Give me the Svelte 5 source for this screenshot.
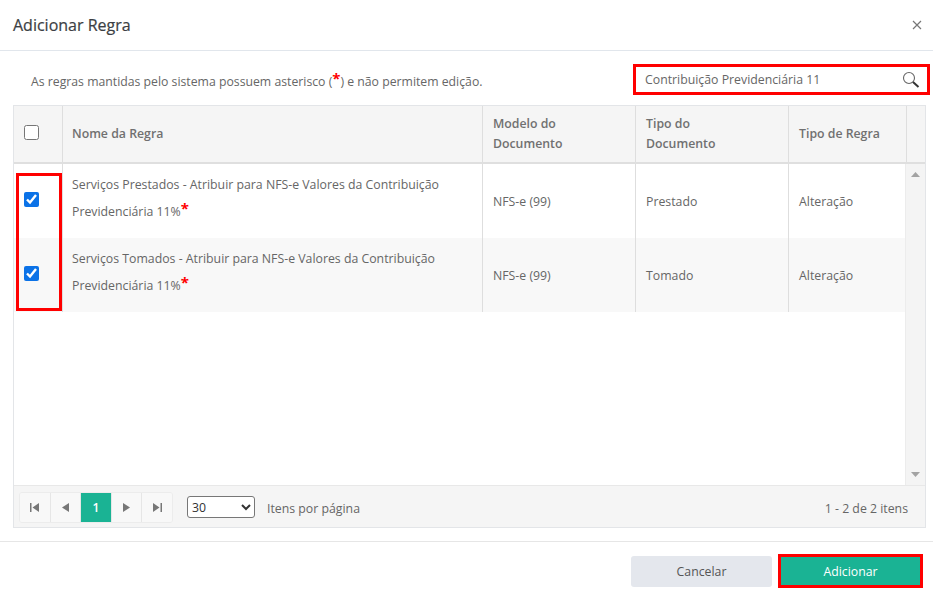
<script>
    const rows = [
        { name: "Serviços Prestados - Atribuir para NFS-e Valores da Contribuição Previdenciária 11%", model: "NFS-e (99)", doc: "Prestado", type: "Alteração" },
        { name: "Serviços Tomados - Atribuir para NFS-e Valores da Contribuição Previdenciária 11%", model: "NFS-e (99)", doc: "Tomado", type: "Alteração" }
    ];
</script>

<div class="modal">
    <header class="head">
        <h2>Adicionar Regra</h2>
        <svg class="close" width="10" height="10" viewBox="0 0 10 10"><path d="M1 1l8 8M9 1l-8 8" stroke="#777" stroke-width="1.2" fill="none" /></svg>
    </header>

    <div class="tools">
        <p>As regras mantidas pelo sistema possuem asterisco (<span class="star">*</span>) e não permitem edição.</p>
        <div class="search">
            <span>Contribuição Previdenciária 11</span>
            <svg width="18" height="18" viewBox="0 0 18 18"><circle cx="7" cy="7" r="5.500" stroke="#666" stroke-width="1.1" fill="none" /><path d="M11 11l5.500 5" stroke="#333" stroke-width="2" fill="none" /></svg>
        </div>
    </div>

    <div class="grid">
        <div class="row headrow">
            <div class="cell check"><input type="checkbox" /></div>
            <div class="cell first">Nome da Regra</div>
            <div class="cell two">Modelo do<br />Documento</div>
            <div class="cell two">Tipo do<br />Documento</div>
            <div class="cell">Tipo de Regra</div>
            <div class="cell"></div>
        </div>

        <div class="body">
            <div class="rows">
                {#each rows as r, i}
                    <div class="row item" class:alt={i % 2 === 1}>
                        <div class="cell check"><input type="checkbox" checked /></div>
                        <div class="cell first name">{r.name}<span class="star">*</span></div>
                        <div class="cell">{r.model}</div>
                        <div class="cell">{r.doc}</div>
                        <div class="cell">{r.type}</div>
                    </div>
                {/each}
            </div>
            <div class="scroll">
                <svg width="9" height="5" viewBox="0 0 9 5"><path d="M4.500 0L9 5H0z" fill="#a3a3a3" /></svg>
                <svg width="9" height="5" viewBox="0 0 9 5"><path d="M0 0h9L4.500 5z" fill="#a3a3a3" /></svg>
            </div>
            <div class="mark"></div>
        </div>

        <div class="pager">
            <div class="pages">
                <button aria-label="Primeira"><svg width="9" height="9" viewBox="0 0 9 9"><path d="M0 0h1.500v9H0zM9 0v9L2.500 4.500z" fill="#777" /></svg></button>
                <button aria-label="Anterior"><svg width="7" height="9" viewBox="0 0 7 9"><path d="M7 0v9L0 4.500z" fill="#777" /></svg></button>
                <button class="on">1</button>
                <button aria-label="Próxima"><svg width="7" height="9" viewBox="0 0 7 9"><path d="M0 0v9l7-4.500z" fill="#777" /></svg></button>
                <button aria-label="Última"><svg width="9" height="9" viewBox="0 0 9 9"><path d="M9 0H7.500v9H9zM0 0v9l6.500-4.500z" fill="#777" /></svg></button>
            </div>
            <select>
                <option>30</option>
            </select>
            <span class="per">Itens por página</span>
            <span class="info">1 - 2 de 2 itens</span>
        </div>
    </div>

    <footer>
        <button class="cancel">Cancelar</button>
        <button class="add">Adicionar</button>
    </footer>
</div>

<style>
    :global(body) {
        background: #fff;
    }

    .modal {
        width: 933px;
        height: 589px;
        overflow: hidden;
        font-family: "Open Sans", sans-serif;
        font-size: 12.3px;
        color: #666;
    }

    .head {
        height: 51px;
        box-sizing: border-box;
        padding: 0 11px 0 13px;
        border-bottom: 1px solid #e1e6ec;
        display: flex;
        justify-content: space-between;
        align-items: center;
    }

    .head h2 {
        margin: 0;
        font-size: 16px;
        font-weight: 400;
        color: #3c3f44;
        -webkit-text-stroke: 0.2px #3c3f44;
    }

    .tools {
        height: 54px;
        box-sizing: border-box;
        padding: 13px 3px 0 31px;
        display: flex;
        justify-content: space-between;
        align-items: flex-start;
    }

    .tools p {
        margin: 10px 0 0;
        line-height: 16px;
        font-size: 12.250px;
    }

    .star {
        color: #f00;
        font-size: 15px;
        font-weight: 700;
        line-height: 0;
        vertical-align: 2px;
    }

    .search {
        width: 297px;
        height: 31px;
        box-sizing: border-box;
        border: 3px solid #f00;
        padding: 0 7px 0 9px;
        display: flex;
        justify-content: space-between;
        align-items: center;
    }

    .grid {
        width: 913px;
        height: 423px;
        margin-left: 13px;
        box-sizing: border-box;
        border: 1px solid #e3e5e8;
        display: flex;
        flex-direction: column;
    }

    .row {
        display: grid;
        grid-template-columns: 49px 420px 153px 153px 118px 19px;
    }

    .headrow {
        height: 58px;
        flex: none;
        box-sizing: border-box;
        background: #f5f5f5;
        border-bottom: 2px solid #dfdfdf;
        font-weight: 600;
        line-height: 20px;
        color: #707070;
    }

    .cell {
        box-sizing: border-box;
        padding: 0 10px;
        display: flex;
        align-items: center;
        border-right: 1px solid #dedede;
    }

    .first {
        padding: 0 9px;
    }

    .headrow .two {
        display: block;
        padding-top: 8px;
    }

    .headrow .cell:last-child {
        border-right: 0;
    }

    .check {
        padding: 0 0 4px 10px;
    }

    .check input {
        width: 15px;
        height: 15px;
        margin: 0;
        accent-color: #0b72e7;
    }

    .body {
        flex: 1;
        display: flex;
        position: relative;
        min-height: 0;
    }

    .rows {
        width: 891px;
    }

    .item {
        grid-template-columns: 49px 420px 153px 153px 116px;
        height: 74px;
    }

    .item .cell:last-child {
        border-right: 0;
    }

    .alt {
        background: #f8f8f8;
    }

    .name {
        display: block;
        padding-top: 7px;
        line-height: 27px;
    }

    .item .check {
        padding-bottom: 3px;
    }

    .scroll {
        flex: 1;
        background: #f4f4f4;
        border-left: 1px solid #ececec;
        display: flex;
        flex-direction: column;
        justify-content: space-between;
        align-items: center;
        padding: 8px 0;
    }

    .mark {
        position: absolute;
        left: 2px;
        top: 9px;
        width: 46px;
        height: 138px;
        box-sizing: border-box;
        border: 3px solid #f00;
    }

    .pager {
        height: 42px;
        flex: none;
        box-sizing: border-box;
        background: #f5f5f5;
        border-top: 1px solid #e8e8e8;
        padding: 6px 17px 0 5px;
        display: flex;
        align-items: flex-start;
    }

    .pages {
        display: flex;
        height: 31px;
        width: 154px;
        box-sizing: border-box;
        border: 1px solid #ececec;
        border-radius: 3px;
        overflow: hidden;
    }

    .pages button {
        flex: 1;
        border: 0;
        border-right: 1px solid #e6e6e6;
        padding: 0;
        background: #f8f8f8;
        display: flex;
        align-items: center;
        justify-content: center;
    }

    .pages button:last-child {
        border-right: 0;
    }

    .pages .on {
        background: #1ab394;
        color: #fff;
        font: 600 12px "Open Sans", sans-serif;
    }

    select {
        width: 68px;
        height: 22px;
        margin: 4px 0 0 14px;
        font: 12.300px "Open Sans", sans-serif;
        color: #333;
        background: #fff;
        border: 1px solid #777;
        border-radius: 3px;
    }

    .per {
        margin: 8px 0 0 12px;
    }

    .info {
        margin: 8px 0 0 auto;
    }

    footer {
        margin-top: 13px;
        border-top: 1px solid #e6e6e6;
        padding: 12px 10px 0 0;
        display: flex;
        justify-content: flex-end;
        align-items: center;
        gap: 6px;
    }

    footer button {
        font: 12.300px "Open Sans", sans-serif;
    }

    .cancel {
        width: 141px;
        height: 31px;
        border: 0;
        border-radius: 3px;
        background: #e4e7ed;
        color: #555;
    }

    .add {
        width: 145px;
        height: 34px;
        border: 3px solid #f00;
        background: #1ab394;
        color: #fff;
    }
</style>
